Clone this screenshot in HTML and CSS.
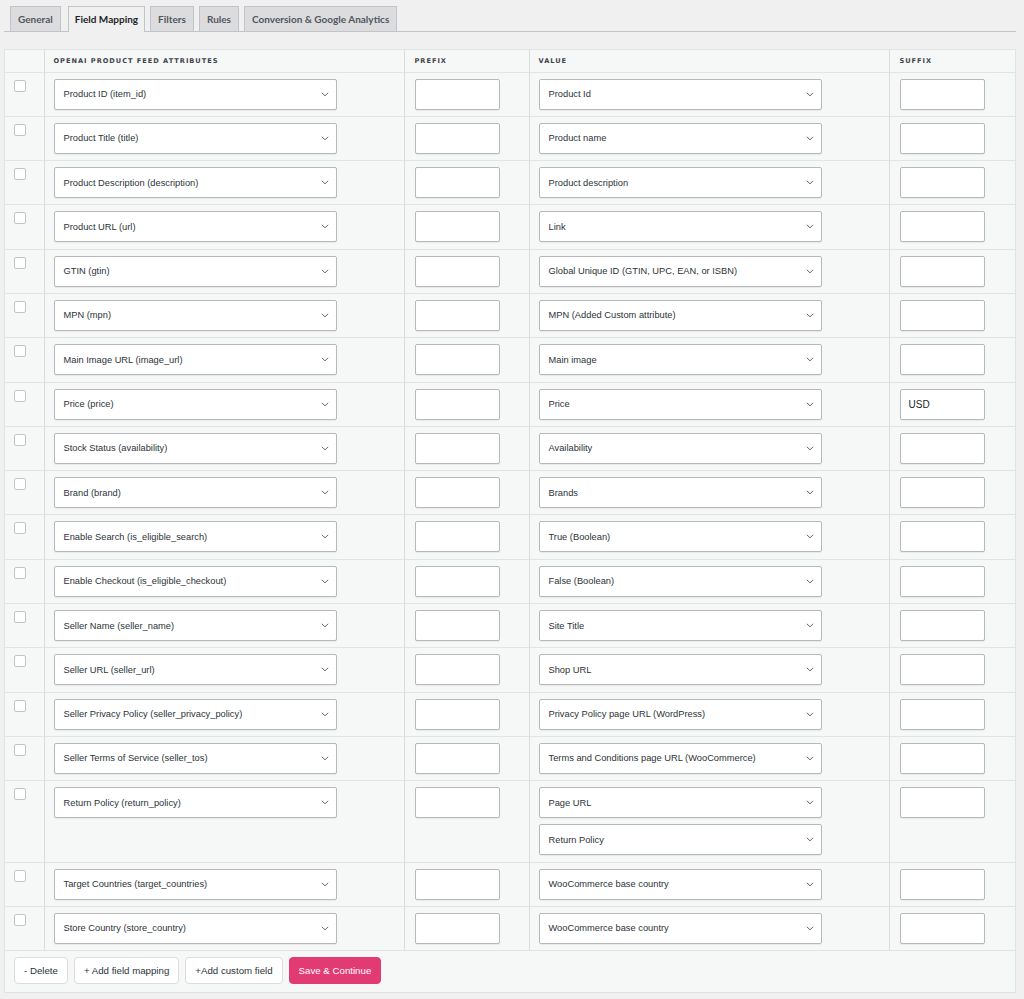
FILE: index.html
```html
<!DOCTYPE html>
<html>
<head>
<meta charset="utf-8">
<link rel="stylesheet" href="styles.css">
</head>
<body>
<div class="page">
  <nav class="tabs">
    <span class="tab">General</span>
    <span class="tab active">Field Mapping</span>
    <span class="tab">Filters</span>
    <span class="tab">Rules</span>
    <span class="tab">Conversion &amp; Google Analytics</span>
  </nav>

  <div class="mapping">
    <table class="grid">
      <colgroup>
        <col class="c-check"><col class="c-attr"><col class="c-prefix"><col class="c-value"><col class="c-suffix">
      </colgroup>
      <thead>
        <tr>
          <th></th>
          <th>OpenAI Product Feed Attributes</th>
          <th>Prefix</th>
          <th>Value</th>
          <th>Suffix</th>
        </tr>
      </thead>
      <tbody id="rows"></tbody>
    </table>
    <div class="actions">
      <button class="btn">- Delete</button>
      <button class="btn">+ Add field mapping</button>
      <button class="btn">+Add custom field</button>
      <button class="btn primary">Save &amp; Continue</button>
    </div>
  </div>
</div>
<script src="app.js"></script>
</body>
</html>
```

FILE: app.js
```js
const rows = [
  ["Product ID (item_id)", ["Product Id"], ""],
  ["Product Title (title)", ["Product name"], ""],
  ["Product Description (description)", ["Product description"], ""],
  ["Product URL (url)", ["Link"], ""],
  ["GTIN (gtin)", ["Global Unique ID (GTIN, UPC, EAN, or ISBN)"], ""],
  ["MPN (mpn)", ["MPN (Added Custom attribute)"], ""],
  ["Main Image URL (image_url)", ["Main image"], ""],
  ["Price (price)", ["Price"], "USD"],
  ["Stock Status (availability)", ["Availability"], ""],
  ["Brand (brand)", ["Brands"], ""],
  ["Enable Search (is_eligible_search)", ["True (Boolean)"], ""],
  ["Enable Checkout (is_eligible_checkout)", ["False (Boolean)"], ""],
  ["Seller Name (seller_name)", ["Site Title"], ""],
  ["Seller URL (seller_url)", ["Shop URL"], ""],
  ["Seller Privacy Policy (seller_privacy_policy)", ["Privacy Policy page URL (WordPress)"], ""],
  ["Seller Terms of Service (seller_tos)", ["Terms and Conditions page URL (WooCommerce)"], ""],
  ["Return Policy (return_policy)", ["Page URL", "Return Policy"], ""],
  ["Target Countries (target_countries)", ["WooCommerce base country"], ""],
  ["Store Country (store_country)", ["WooCommerce base country"], ""]
];
const chev = '<svg class="chev" width="8" height="5" viewBox="0 0 8 5"><path d="M0.8 0.8 L4 3.8 L7.2 0.8" fill="none" stroke="#646970" stroke-width="1"/></svg>';
const sel = t => `<div class="select"><span>${t}</span>${chev}</div>`;
const tbody = document.getElementById("rows");
tbody.innerHTML = rows.map(([a, vals, suf]) => `
<tr>
  <td><span class="cb"></span></td>
  <td>${sel(a)}</td>
  <td><span class="input"></span></td>
  <td><div class="stack">${vals.map(sel).join("")}</div></td>
  <td><span class="input">${suf}</span></td>
</tr>`).join("");
```

FILE: styles.css
```css
* { box-sizing: border-box; }
html, body { margin: 0; padding: 0; }
body {
  background: #f0f0f1;
  font-family: "Liberation Sans", Arial, sans-serif;
  color: #2c3338;
}
.page { padding: 6px 8px 0 4px; }

.tabs {
  display: flex;
  gap: 5px;
  padding-left: 6px;
  border-bottom: 1px solid #c3c4c7;
  height: 26px;
}
.tab {
  font-family: Lato, "Open Sans", sans-serif;
  font-weight: 700;
  font-size: 10px;
  color: #50575e;
  background: #dcdcde;
  border: 1px solid #c3c4c7;
  border-bottom: none;
  padding: 0 7px;
  height: 25px;
  line-height: 24px;
  white-space: nowrap;
}
.tab.active {
  background: #f0f0f1;
  color: #1d2327;
  height: 26px;
  padding: 0 6px;
  margin-left: 2px;
}

.mapping {
  margin-top: 17px;
  width: 1012px;
  background: #f6f7f7;
  border: 1px solid #e2e3e5;
}
.grid {
  width: 100%;
  border-collapse: collapse;
  table-layout: fixed;
}
.c-check { width: 39px; }
.c-attr { width: 360px; }
.c-prefix { width: 125px; }
.c-value { width: 360px; }
.c-suffix { width: 126px; }

.grid th {
  height: 22px;
  text-align: left;
  font-family: "DejaVu Sans", sans-serif;
  font-weight: 700;
  font-size: 6.6px;
  letter-spacing: 1px;
  text-transform: uppercase;
  color: #3c434a;
  padding: 0 0 0 9px;
  border-bottom: 1px solid #e2e3e5;
  vertical-align: middle;
}
.grid td {
  padding: 6px 0 6.3px 9px;
  border-bottom: 1px solid #e2e3e5;
  vertical-align: top;
}
.grid th + th, .grid td + td { border-left: 1px solid #dcdcde; }
.grid th:nth-child(3), .grid td:nth-child(3),
.grid th:nth-child(5), .grid td:nth-child(5) { padding-left: 10px; }

.cb {
  display: block;
  width: 12px;
  height: 12px;
  border: 1px solid #c3c4c7;
  border-radius: 2px;
  background: #fff;
  margin-top: 1px;
}
.select {
  width: 283px;
  height: 31px;
  background: #fff;
  border: 1px solid #b6b8bb;
  border-radius: 2px;
  box-shadow: 0 1px 1px rgba(0,0,0,0.06);
  display: flex;
  align-items: center;
  justify-content: space-between;
  padding: 0 7px 0 9px;
  font-size: 9.3px;
  color: #2c3338;
}
.chev { flex: none; }
.stack { display: flex; flex-direction: column; gap: 6px; }
.input {
  display: flex;
  align-items: center;
  width: 85px;
  height: 31px;
  background: #fff;
  border: 1px solid #b6b8bb;
  border-radius: 2px;
  box-shadow: 0 1px 1px rgba(0,0,0,0.06);
  padding: 0 8px;
  font-size: 10px;
  color: #1d2327;
}

.actions {
  display: flex;
  gap: 6px;
  padding: 6px 9px 8px 9px;
}
.btn {
  height: 27px;
  padding: 0 9px;
  background: #fff;
  border: 1px solid #dcdcde;
  border-radius: 4px;
  font-family: "Liberation Sans", Arial, sans-serif;
  font-size: 9.7px;
  color: #2c3338;
}
.btn.primary {
  background: #e23a72;
  border-color: #e23a72;
  color: #fff;
}
```
